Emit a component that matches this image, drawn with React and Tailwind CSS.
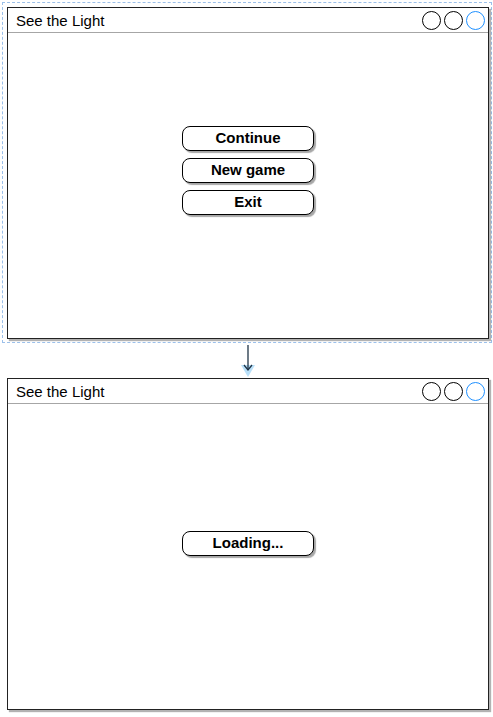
import React from "react";

const font = { fontFamily: '"Liberation Sans", Arial, sans-serif' };

const TitleBar = ({ title }) => (
  <div className="flex items-center justify-between h-[25px] border-b border-[#a6a6a6] pl-[8px] pr-[3px]">
    <span className="text-[15px] text-black leading-none pt-[1px]">{title}</span>
    <div className="flex gap-[3px]">
      <span className="w-[19px] h-[19px] rounded-full border-[1.5px] border-black" />
      <span className="w-[19px] h-[19px] rounded-full border-[1.5px] border-black" />
      <span className="w-[19px] h-[19px] rounded-full border-[1.5px] border-[#1e90ff]" />
    </div>
  </div>
);

const Button = ({ label }) => (
  <div className="w-[132px] h-[25px] rounded-[8px] border border-black bg-white flex items-center justify-center text-[15px] font-bold text-black shadow-[2px_2px_1px_rgba(0,0,0,0.35)]">
    {label}
  </div>
);

const Window = ({ title, children, className }) => (
  <div className={`bg-white border border-[#222] shadow-[2px_2px_1px_rgba(0,0,0,0.3)] flex flex-col ${className}`}>
    <TitleBar title={title} />
    {children}
  </div>
);

export default function App() {
  return (
    <div className="w-[493px] h-[717px] bg-white relative overflow-hidden" style={font}>
      {/* selected window */}
      <div className="ml-[2px] mt-[2px] w-[490px] h-[341px] border border-dashed border-[#9cc0ea] pl-[4px] pt-[4px]">
        <Window title="See the Light" className="w-[482px] h-[332px]">
          <div className="flex flex-col items-center gap-[7px] pt-[93px]">
            <Button label="Continue" />
            <Button label="New game" />
            <Button label="Exit" />
          </div>
        </Window>
      </div>

      {/* connector arrow */}
      <div className="flex justify-center h-[35px] pl-[3px]">
        <svg width="20" height="35" viewBox="0 0 20 35">
          <polygon points="3,22 17,22 10,34" fill="#a8d8f8" opacity="0.8" />
          <line x1="10" y1="2" x2="10" y2="27" stroke="#1f3346" strokeWidth="1.3" />
          <polyline points="6,22 10,27 14,22" fill="none" stroke="#1f3346" strokeWidth="1.3" />
        </svg>
      </div>

      {/* loading window */}
      <div className="pl-[7px]">
        <Window title="See the Light" className="w-[482px] h-[332px]">
          <div className="flex flex-col items-center pt-[127px]">
            <Button label="Loading..." />
          </div>
        </Window>
      </div>
    </div>
  );
}
